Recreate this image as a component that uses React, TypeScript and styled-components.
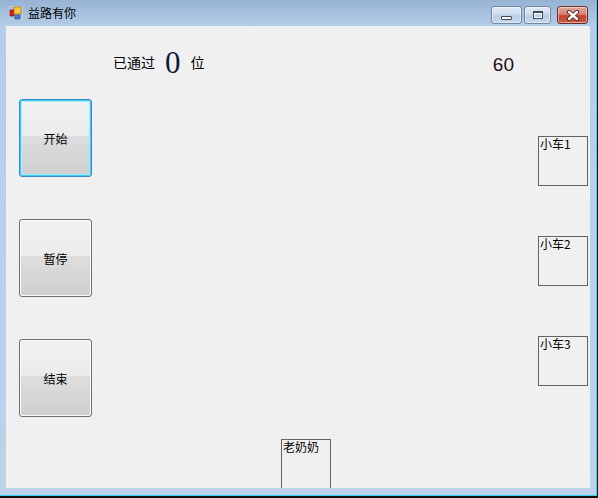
import styled, { createGlobalStyle } from 'styled-components';

const cjk = `"Noto Sans CJK SC", "Noto Sans", sans-serif`;

const GlobalStyle = createGlobalStyle`
  html, body {
    margin: 0;
    padding: 0;
    background: #f0f0f0;
  }
  * {
    box-sizing: border-box;
  }
`;

//#region window chrome
const Window = styled.div`
  width: 598px;
  height: 498px;
  border-right: 1px solid #101010;
  border-bottom: 2px solid #101010;
  overflow: hidden;
`;

const Frame = styled.div`
  display: flex;
  flex-direction: column;
  height: 100%;
  padding: 0 6px 7px 6px;
  border-right: 1px solid #2fd3f3;
  border-bottom: 1px solid #2fd3f3;
  background: linear-gradient(#97b3d3 0px, #b6cee9 28px, #bcd3ec 100%);
`;

const TitleBar = styled.div`
  display: flex;
  align-items: center;
  height: 26px;
  margin: 0 -6px;
  padding: 0 8px 1px 9px;
`;

const TitleText = styled.span`
  margin-left: 5px;
  font-family: ${cjk};
  font-size: 12px;
  line-height: 14px;
  color: #000;
  flex: 1;
`;

const CaptionButtons = styled.div`
  display: flex;
  align-self: flex-start;
  margin-top: 6px;
`;

const CaptionButton = styled.div<{ $w: number; $gap?: number; $close?: boolean }>`
  display: flex;
  justify-content: center;
  align-items: center;
  width: ${(p) => p.$w}px;
  height: 18px;
  margin-left: ${(p) => p.$gap ?? 0}px;
  border: 1px solid ${(p) => (p.$close ? '#6d2b2b' : '#71869f')};
  border-radius: 3px;
  background: ${(p) =>
    p.$close
      ? 'linear-gradient(#e3a89c 0%, #d8826f 45%, #c2422d 55%, #cc5a43 100%)'
      : 'linear-gradient(#e3ecf6 0%, #cedcec 45%, #b9cde4 55%, #c6d8ec 100%)'};
  box-shadow: inset 0 0 0 1px rgba(255, 255, 255, 0.45);
`;

const MinGlyph = styled.div`
  width: 11px;
  height: 4px;
  margin-top: 5px;
  background: #fff;
  border: 1px solid #3e4a5c;
  border-radius: 1px;
`;

const MaxGlyph = styled.div`
  width: 10px;
  height: 8px;
  border: 1px solid #3e4a5c;
  border-top-width: 2px;
  background: transparent;
  box-shadow: inset 0 0 0 1px #fff;
`;
//#endregion

//#region client
const Client = styled.div`
  position: relative;
  display: flex;
  flex: 1;
  padding-left: 13px;
  background: #f0f0f0;
  overflow: hidden;
`;

const ButtonColumn = styled.div`
  display: flex;
  flex-direction: column;
  gap: 42px;
  padding-top: 73px;
`;

const FormButton = styled.button<{ $focused?: boolean }>`
  width: 73px;
  height: 78px;
  padding: 0;
  font-family: ${cjk};
  font-size: 12px;
  color: #000;
  border: 1px solid ${(p) => (p.$focused ? '#3488c2' : '#707070')};
  border-radius: 3px;
  background: linear-gradient(#f2f2f2 0%, #ebebeb 48%, #dddddd 48%, #cfcfcf 100%);
  box-shadow: ${(p) =>
    p.$focused ? 'inset 0 0 0 1px #3fd0f5, inset 0 0 0 2px #a8e8fb' : 'inset 0 0 0 1px #fbfbfb'};
`;

const Main = styled.div`
  flex: 1;
  padding: 0 76px 0 21px;
`;

const Header = styled.div`
  display: flex;
  align-items: flex-start;
`;

const Label = styled.span`
  margin-top: 29px;
  font-family: ${cjk};
  font-size: 14px;
  line-height: 14px;
  color: #000;
`;

const Passed = styled.span`
  margin: 21px 10px 0 10px;
  font-family: "Liberation Serif", serif;
  font-size: 31px;
  line-height: 31px;
  color: #0a1a40;
`;

const Score = styled.span`
  margin: 28px 0 0 auto;
  font-family: "Liberation Sans", Arial, sans-serif;
  font-size: 19px;
  line-height: 22px;
  color: #1a1010;
`;

const Sprite = styled.div`
  position: absolute;
  width: 50px;
  height: 50px;
  padding: 0 0 0 1px;
  border: 1px solid #646464;
  font-family: ${cjk};
  font-size: 12px;
  line-height: 13px;
  color: #000;
`;
//#endregion

const AppIcon = () => (
  <svg width="14" height="14" viewBox="0 0 14 14">
    <rect x="0.5" y="0.5" width="13" height="13" fill="none" stroke="#c8ccd4" />
    <rect x="1" y="4" width="4" height="6" fill="#d42020" stroke="#7a1010" strokeWidth="0.6" />
    <rect x="5" y="1" width="7" height="7" fill="#f7c844" stroke="#b37a10" strokeWidth="0.8" />
    <rect x="6" y="9" width="5" height="4" fill="#4a78d0" stroke="#2a4a90" strokeWidth="0.6" />
  </svg>
);

const CloseGlyph = () => (
  <svg width="14" height="11" viewBox="0 0 14 11">
    <path d="M3 2 L11 9 M11 2 L3 9" stroke="#3b2a2a" strokeWidth="4.2" strokeLinecap="round" />
    <path d="M3 2 L11 9 M11 2 L3 9" stroke="#ffffff" strokeWidth="2.4" strokeLinecap="round" />
  </svg>
);

const cars = [
  { name: '小车1', top: 110 },
  { name: '小车2', top: 210 },
  { name: '小车3', top: 310 },
];

const App = () => {
  return (
    <>
      <GlobalStyle />
      <Window>
        <Frame>
          <TitleBar>
            <AppIcon />
            <TitleText>益路有你</TitleText>
            <CaptionButtons>
              <CaptionButton $w={31}>
                <MinGlyph />
              </CaptionButton>
              <CaptionButton $w={27} $gap={2}>
                <MaxGlyph />
              </CaptionButton>
              <CaptionButton $w={31} $gap={6} $close>
                <CloseGlyph />
              </CaptionButton>
            </CaptionButtons>
          </TitleBar>
          <Client>
            <ButtonColumn>
              <FormButton $focused>开始</FormButton>
              <FormButton>暂停</FormButton>
              <FormButton>结束</FormButton>
            </ButtonColumn>
            <Main>
              <Header>
                <Label>已通过</Label>
                <Passed>0</Passed>
                <Label>位</Label>
                <Score>60</Score>
              </Header>
            </Main>
            {cars.map((car) => (
              <Sprite key={car.name} style={{ left: 532, top: car.top }}>
                {car.name}
              </Sprite>
            ))}
            <Sprite style={{ left: 275, top: 413 }}>老奶奶</Sprite>
          </Client>
        </Frame>
      </Window>
    </>
  );
};

export default App;
